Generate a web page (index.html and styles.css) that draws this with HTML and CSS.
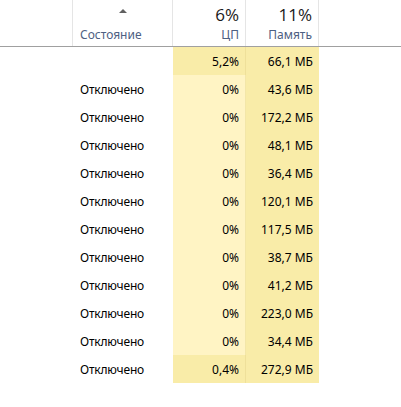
FILE: index.html
```html
<!DOCTYPE html>
<html lang="ru">
<head>
<meta charset="utf-8">
<link rel="stylesheet" href="styles.css">
</head>
<body>
<div class="table">
  <div class="head">
    <div class="hc blank"></div>
    <div class="hc status">
      <span class="sort"></span>
      <span class="label">Состояние</span>
    </div>
    <div class="hc num">
      <span class="big">6%</span>
      <span class="label">ЦП</span>
    </div>
    <div class="hc num">
      <span class="big">11%</span>
      <span class="label">Память</span>
    </div>
    <div class="hc rest"></div>
  </div>
  <div class="rows">
    <div class="row"><div></div><div class="st"></div><div class="c cpu-m">5,2%</div><div class="c mem">66,1 МБ</div><div></div></div>
    <div class="row"><div></div><div class="st">Отключено</div><div class="c cpu-l">0%</div><div class="c mem">43,6 МБ</div><div></div></div>
    <div class="row"><div></div><div class="st">Отключено</div><div class="c cpu-l">0%</div><div class="c mem">172,2 МБ</div><div></div></div>
    <div class="row"><div></div><div class="st">Отключено</div><div class="c cpu-l">0%</div><div class="c mem">48,1 МБ</div><div></div></div>
    <div class="row"><div></div><div class="st">Отключено</div><div class="c cpu-l">0%</div><div class="c mem">36,4 МБ</div><div></div></div>
    <div class="row"><div></div><div class="st">Отключено</div><div class="c cpu-l">0%</div><div class="c mem">120,1 МБ</div><div></div></div>
    <div class="row"><div></div><div class="st">Отключено</div><div class="c cpu-l">0%</div><div class="c mem">117,5 МБ</div><div></div></div>
    <div class="row"><div></div><div class="st">Отключено</div><div class="c cpu-l">0%</div><div class="c mem">38,7 МБ</div><div></div></div>
    <div class="row"><div></div><div class="st">Отключено</div><div class="c cpu-l">0%</div><div class="c mem">41,2 МБ</div><div></div></div>
    <div class="row"><div></div><div class="st">Отключено</div><div class="c cpu-l">0%</div><div class="c mem">223,0 МБ</div><div></div></div>
    <div class="row"><div></div><div class="st">Отключено</div><div class="c cpu-l">0%</div><div class="c mem">34,4 МБ</div><div></div></div>
    <div class="row"><div></div><div class="st">Отключено</div><div class="c cpu-m">0,4%</div><div class="c mem">272,9 МБ</div><div></div></div>
  </div>
</div>
</body>
</html>
```
FILE: styles.css
```css
html, body {
  margin: 0;
  padding: 0;
  background: #ffffff;
}
body {
  font-family: "Noto Sans", "Open Sans", sans-serif;
  font-size: 12px;
  color: #000;
}
.table {
  width: 401px;
}
.head {
  display: grid;
  grid-template-columns: 73px 100px 73px 73px 1fr;
  height: 46px;
  border-bottom: 1px solid #a0a0a0;
}
.hc {
  border-right: 1px solid #e5e5e5;
  display: flex;
  flex-direction: column;
  box-sizing: border-box;
}
.hc.rest {
  border-right: none;
}
.status {
  padding: 0 0 0 7px;
  justify-content: space-between;
}
.sort {
  align-self: center;
  width: 0;
  height: 0;
  border-left: 4px solid transparent;
  border-right: 4px solid transparent;
  border-bottom: 4px solid #606060;
  margin-top: 9px;
  margin-right: 7px;
}
.label {
  color: #4d6082;
  font-size: 12px;
  line-height: 16px;
  padding-bottom: 3px;
}
.num {
  align-items: flex-end;
  padding-right: 6px;
  justify-content: space-between;
}
.big {
  font-family: "Open Sans", "Noto Sans", sans-serif;
  font-weight: 400;
  font-size: 17px;
  line-height: 22px;
  margin-top: 4px;
  color: #1a1a1a;
}
.rows {
  display: flex;
  flex-direction: column;
}
.row {
  display: grid;
  grid-template-columns: 73px 100px 73px 73px 1fr;
  height: 28px;
  align-items: stretch;
}
.st {
  padding-left: 7px;
  display: flex;
  align-items: center;
  letter-spacing: -0.2px;
}
.c {
  display: flex;
  align-items: center;
  justify-content: flex-end;
  padding-right: 6px;
}
.cpu-l {
  background: #fff4c4;
  border-right: 1px solid #f3e6a8;
}
.cpu-m {
  background: #f9eca8;
  border-right: 1px solid #efe09a;
}
.mem {
  background: #f9eca8;
}
```
